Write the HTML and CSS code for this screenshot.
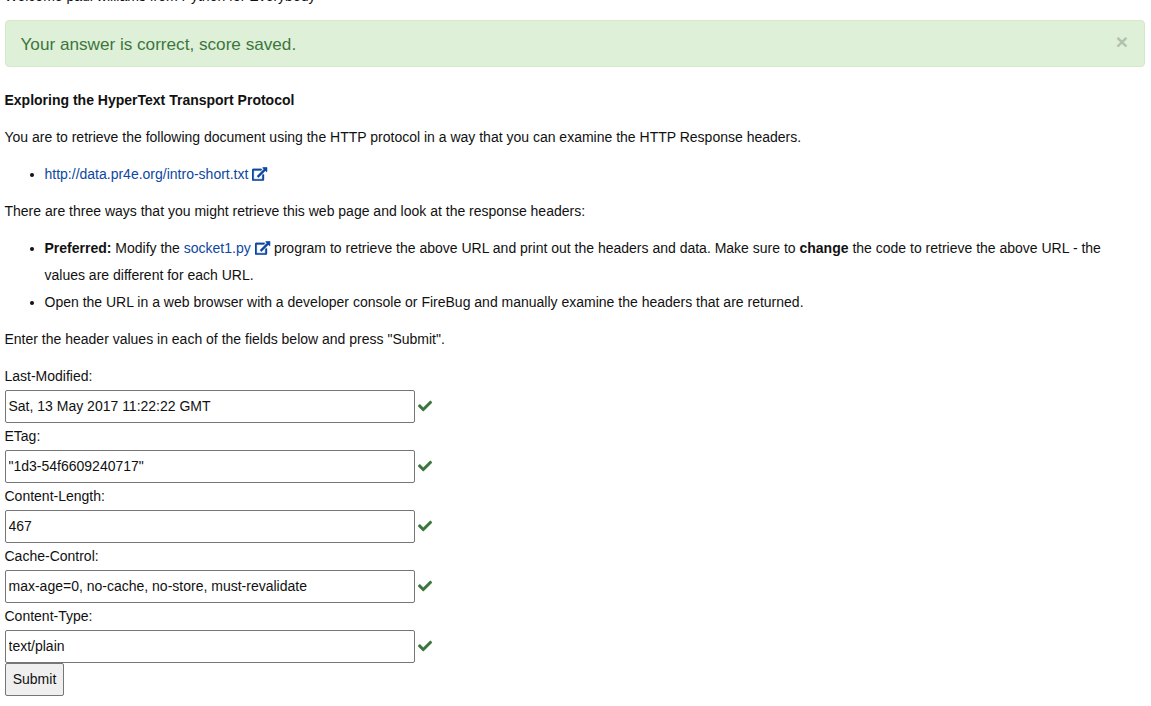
FILE: index.html
```html
<!DOCTYPE html>
<html lang="en">
<head>
<meta charset="utf-8">
<title>Exploring the HyperText Transport Protocol</title>
<link rel="stylesheet" href="styles.css">
</head>
<body>
<svg class="defs" width="0" height="0">
<symbol id="ext" viewBox="0 0 576 512"><path d="M576 24v127.984c0 21.461-25.96 31.98-40.971 16.971l-35.707-35.709-243.523 243.523c-9.373 9.373-24.568 9.373-33.941 0l-22.627-22.627c-9.373-9.373-9.373-24.569 0-33.941L442.756 76.676l-35.703-35.705C391.982 25.9 402.656 0 424.024 0H552c13.255 0 24 10.745 24 24zM407.029 270.794l-16 16A23.999 23.999 0 0 0 384 303.765V448H64V128h264a24.003 24.003 0 0 0 16.97-7.029l16-16C376.089 89.851 365.381 64 344 64H48C21.49 64 0 85.49 0 112v352c0 26.51 21.49 48 48 48h352c26.51 0 48-21.49 48-48V287.764c0-21.382-25.852-32.09-40.971-16.97z"/></symbol>
<symbol id="check" viewBox="0 0 512 512"><path d="M173.898 439.404l-166.4-166.4c-9.997-9.997-9.997-26.206 0-36.204l36.203-36.204c9.997-9.998 26.207-9.998 36.204 0L192 312.69 432.095 72.596c9.997-9.997 26.207-9.997 36.204 0l36.203 36.204c9.997 9.997 9.997 26.206 0 36.204l-294.4 294.401c-9.998 9.997-26.207 9.997-36.204-.001z"/></symbol>
</svg>
<p class="welcome">Welcome paul williams from Python for Everybody</p>
<div class="alert"><span>Your answer is correct, score saved.</span><span class="close">×</span></div>
<p><b>Exploring the HyperText Transport Protocol</b></p>
<p>You are to retrieve the following document using the HTTP protocol in a way that you can examine the HTTP Response headers.</p>
<ul><li><a href="#">http://data.pr4e.org/intro-short.txt <svg class="ext"><use href="#ext"/></svg></a></li></ul>
<p>There are three ways that you might retrieve this web page and look at the response headers:</p>
<ul>
<li><b>Preferred:</b> Modify the <a href="#">socket1.py <svg class="ext"><use href="#ext"/></svg></a> program to retrieve the above URL and print out the headers and data. Make sure to <b>change</b> the code to retrieve the above URL - the values are different for each URL.</li>
<li>Open the URL in a web browser with a developer console or FireBug and manually examine the headers that are returned.</li>
</ul>
<p>Enter the header values in each of the fields below and press "Submit".</p>
<form>
<label>Last-Modified:</label>
<div class="field"><input type="text" value="Sat, 13 May 2017 11:22:22 GMT"><svg class="check"><use href="#check"/></svg></div>
<label>ETag:</label>
<div class="field"><input type="text" value="&quot;1d3-54f6609240717&quot;"><svg class="check"><use href="#check"/></svg></div>
<label>Content-Length:</label>
<div class="field"><input type="text" value="467"><svg class="check"><use href="#check"/></svg></div>
<label>Cache-Control:</label>
<div class="field"><input type="text" value="max-age=0, no-cache, no-store, must-revalidate"><svg class="check"><use href="#check"/></svg></div>
<label>Content-Type:</label>
<div class="field"><input type="text" value="text/plain"><svg class="check"><use href="#check"/></svg></div>
<button type="button">Submit</button>
</form>
</body>
</html>
```
FILE: styles.css
```css
* { box-sizing: border-box; }
html { overflow: hidden; }
body {
  margin: 0;
  padding: 0 6px 0 4.5px;
  background: #fff;
  color: #111;
  font: 14px/27px "Liberation Sans", Arial, sans-serif;
}
.defs { position: absolute; }
p { margin: 0 0 10px; }
.welcome { margin: -17px 0 10px; }
.alert {
  display: flex;
  justify-content: space-between;
  height: 47px;
  margin: 0 0 20px 0.5px;
  padding: 0 16px 0 14.5px;
  border: 1px solid #d6e9c6;
  border-radius: 4px;
  background: #dff0d8;
  color: #3c763d;
  font-size: 17.15px;
  line-height: 46px;
}
.close { color: #b2c0ad; font-size: 21px; font-weight: bold; line-height: 42px; }
ul { margin: 0 0 10px; padding-left: 40px; }
a { color: #0d47a1; text-decoration: none; }
.ext {
  width: 15.4px;
  height: 14px;
  overflow: visible;
  fill: currentColor;
  stroke: currentColor;
  stroke-width: 14;
  vertical-align: -1.75px;
}
form { display: flex; flex-direction: column; align-items: flex-start; }
label { height: 27px; }
.field { display: flex; align-items: center; gap: 3px; height: 33px; margin-left: 0.5px; }
input {
  width: 410px;
  height: 33px;
  padding: 0 2px 2px 2.5px;
  border: 1px solid #767676;
  border-radius: 2px;
  color: #111;
  font: inherit;
}
.check {
  width: 14px;
  height: 14px;
  margin-bottom: 2px;
  overflow: visible;
  fill: #3c763d;
  stroke: #3c763d;
  stroke-width: 8;
}
button {
  width: 59px;
  height: 33px;
  margin-left: 0.5px;
  padding: 1px 6px;
  border: 1px solid #767676;
  border-radius: 2px;
  background: #efefef;
  color: #111;
  font: inherit;
}
```
